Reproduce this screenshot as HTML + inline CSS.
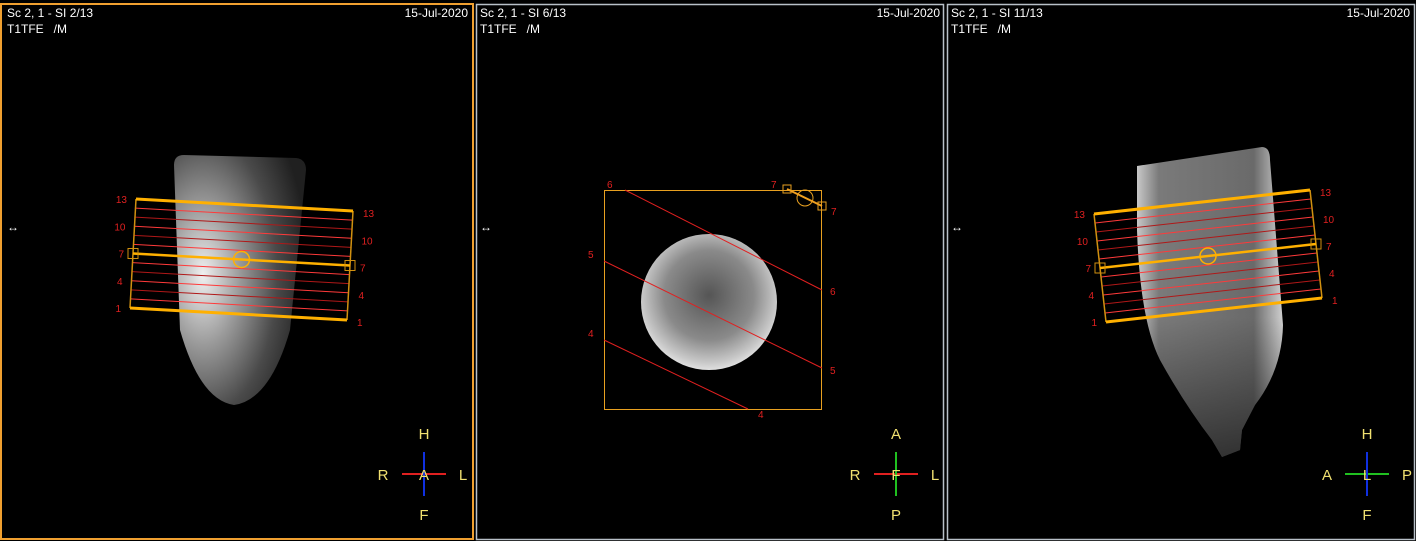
<!DOCTYPE html>
<html><head><meta charset="utf-8"><style>
html,body{margin:0;padding:0;background:#000;width:1416px;height:541px;overflow:hidden}
svg{display:block}
text{font-family:"Liberation Sans",Arial,sans-serif}
.hd{fill:#fff;font-size:12px}
.num{fill:#e02020;font-size:10px}
.ori{fill:#f0e070;font-size:15px}
</style></head><body>
<svg id="s" width="1416" height="541" viewBox="0 0 1416 541" xmlns="http://www.w3.org/2000/svg">
<defs>
<radialGradient id="g1" cx="0.22" cy="0.48" r="0.8"><stop offset="0" stop-color="#f0f0f0"/><stop offset="0.35" stop-color="#9a9a9a"/><stop offset="0.7" stop-color="#4a4a4a"/><stop offset="1" stop-color="#202020"/></radialGradient>
<radialGradient id="g2" cx="0.5" cy="0.45" r="0.55"><stop offset="0" stop-color="#555"/><stop offset="0.6" stop-color="#8a8a8a"/><stop offset="0.9" stop-color="#c8c8c8"/><stop offset="1" stop-color="#e0e0e0"/></radialGradient>
<linearGradient id="g3" x1="0" x2="1"><stop offset="0" stop-color="#c8c8c8"/><stop offset="0.15" stop-color="#7a7a7a"/><stop offset="0.8" stop-color="#6a6a6a"/><stop offset="1" stop-color="#d0d0d0"/></linearGradient>
<linearGradient id="g3v" x1="0" x2="0" y1="0" y2="1"><stop offset="0" stop-color="#000" stop-opacity="0"/><stop offset="0.55" stop-color="#000" stop-opacity="0"/><stop offset="1" stop-color="#000" stop-opacity="0.55"/></linearGradient>
</defs>
<rect width="1416" height="541" fill="#000"/>
<rect x="1" y="4" width="472" height="535" fill="none" stroke="#f0a030" stroke-width="2"/>
<rect x="476.5" y="4.5" width="467" height="535" fill="none" stroke="#b8c0c8" stroke-width="1.5"/>
<rect x="947.5" y="4.5" width="467" height="535" fill="none" stroke="#b8c0c8" stroke-width="1.5"/>
<text class="hd" x="7" y="17">Sc 2, 1 - SI 2/13</text><text class="hd" x="7" y="33">T1TFE &#160;&#160;/M</text><text class="hd" x="468" y="17" text-anchor="end">15-Jul-2020</text>
<text class="hd" x="480" y="17">Sc 2, 1 - SI 6/13</text><text class="hd" x="480" y="33">T1TFE &#160;&#160;/M</text><text class="hd" x="940" y="17" text-anchor="end">15-Jul-2020</text>
<text class="hd" x="951" y="17">Sc 2, 1 - SI 11/13</text><text class="hd" x="951" y="33">T1TFE &#160;&#160;/M</text><text class="hd" x="1410" y="17" text-anchor="end">15-Jul-2020</text>
<text class="hd" x="7" y="231" font-size="11">↔</text><text class="hd" x="480" y="231" font-size="11">↔</text><text class="hd" x="951" y="231" font-size="11">↔</text>
<path d="M174 165 Q174 155 184 155 L296 158 Q306 159 306 170 L290 330 Q270 400 234 405 Q200 400 180 330 Z" fill="url(#g1)"/>
<circle cx="709" cy="302" r="68" fill="url(#g2)"/>
<path d="M1137 166 L1262 147 Q1270 147 1270 160 L1283 325 Q1282 370 1255 405 L1242 430 L1240 450 L1222 457 L1212 440 Q1185 405 1160 360 Q1140 320 1137 230 Z" fill="url(#g3)"/>
<path d="M1137 166 L1262 147 Q1270 147 1270 160 L1283 325 Q1282 370 1255 405 L1242 430 L1240 450 L1222 457 L1212 440 Q1185 405 1160 360 Q1140 320 1137 230 Z" fill="url(#g3v)"/>
<g id="ov"></g>
<g fill="none" stroke="#e8a020" stroke-width="1"><rect x="604.5" y="190.5" width="217" height="219"/><rect x="783" y="185" width="8" height="8"/><rect x="818" y="202" width="8" height="8"/><circle cx="805" cy="198" r="8"/></g>
<line x1="787" y1="189" x2="822" y2="206" stroke="#f0a020" stroke-width="2"/>
<g stroke="#e02020" stroke-width="1"><line x1="625" y1="190" x2="822" y2="290"/><line x1="604" y1="261" x2="822" y2="368"/><line x1="604" y1="340" x2="748" y2="409"/></g>
<g class="num"><text x="607" y="188">6</text><text x="771" y="188">7</text><text x="831" y="215">7</text><text x="588" y="258">5</text><text x="830" y="295">6</text><text x="588" y="337">4</text><text x="830" y="374">5</text><text x="758" y="418">4</text></g>
<g class="ori" text-anchor="middle">
<text x="424" y="439">H</text><text x="383" y="480">R</text><text x="463" y="480">L</text><text x="424" y="520">F</text>
<text x="896" y="439">A</text><text x="855" y="480">R</text><text x="935" y="480">L</text><text x="896" y="520">P</text>
<text x="1367" y="439">H</text><text x="1327" y="480">A</text><text x="1407" y="480">P</text><text x="1367" y="520">F</text>
</g>
<line x1="402" y1="474" x2="446" y2="474" stroke="#e02020" stroke-width="2"/><line x1="424" y1="452" x2="424" y2="496" stroke="#1030e0" stroke-width="2"/>
<line x1="874" y1="474" x2="918" y2="474" stroke="#e02020" stroke-width="2"/><line x1="896" y1="452" x2="896" y2="496" stroke="#20c020" stroke-width="2"/>
<line x1="1345" y1="474" x2="1389" y2="474" stroke="#20c020" stroke-width="2"/><line x1="1367" y1="452" x2="1367" y2="496" stroke="#1030e0" stroke-width="2"/>
<g class="ori" text-anchor="middle"><text x="424" y="480">A</text><text x="896" y="480">F</text><text x="1367" y="480">L</text></g>
</svg>
<script>
var ns="http://www.w3.org/2000/svg",ov=document.getElementById("ov");
function el(t,a){var e=document.createElementNS(ns,t);for(var k in a)e.setAttribute(k,a[k]);ov.appendChild(e);return e}
function stack(TL,TR,BL,BR){
 for(var i=0;i<13;i++){var t=i/12;
  var lx=TL[0]+t*(BL[0]-TL[0]),ly=TL[1]+t*(BL[1]-TL[1]),rx=TR[0]+t*(BR[0]-TR[0]),ry=TR[1]+t*(BR[1]-TR[1]);
  if(i>0&&i<12&&i!=6)el("line",{x1:lx,y1:ly,x2:rx,y2:ry,stroke:(i%2?"#ff3a3a":"#b01818"),"stroke-width":1});
 }
 el("line",{x1:TL[0],y1:TL[1],x2:BL[0],y2:BL[1],stroke:"#d09010","stroke-width":1.5});
 el("line",{x1:TR[0],y1:TR[1],x2:BR[0],y2:BR[1],stroke:"#d09010","stroke-width":1.5});
 el("line",{x1:TL[0],y1:TL[1],x2:TR[0],y2:TR[1],stroke:"#ffb000","stroke-width":3});
 el("line",{x1:BL[0],y1:BL[1],x2:BR[0],y2:BR[1],stroke:"#ffb000","stroke-width":3});
 var ml=[(TL[0]+BL[0])/2,(TL[1]+BL[1])/2],mr=[(TR[0]+BR[0])/2,(TR[1]+BR[1])/2];
 el("line",{x1:ml[0],y1:ml[1],x2:mr[0],y2:mr[1],stroke:"#ffb000","stroke-width":2.5});
 el("rect",{x:ml[0]-5,y:ml[1]-5,width:10,height:10,fill:"none",stroke:"#d09010"});
 el("rect",{x:mr[0]-5,y:mr[1]-5,width:10,height:10,fill:"none",stroke:"#d09010"});
 el("circle",{cx:(ml[0]+mr[0])/2,cy:(ml[1]+mr[1])/2,r:8,fill:"none",stroke:"#ffb000","stroke-width":1.5});
 [["13",0],["10",3],["7",6],["4",9],["1",12]].forEach(function(p){var t=p[1]/12;
  var lx=TL[0]+t*(BL[0]-TL[0]),ly=TL[1]+t*(BL[1]-TL[1]),rx=TR[0]+t*(BR[0]-TR[0]),ry=TR[1]+t*(BR[1]-TR[1]);
  var a=el("text",{x:lx-9,y:ly+4,"class":"num","text-anchor":"end"});a.textContent=p[0];
  var b=el("text",{x:rx+10,y:ry+6,"class":"num"});b.textContent=p[0];});
}
stack([136,199],[353,211],[130,308],[347,320]);
stack([1094,214],[1310,190],[1106,322],[1322,298]);
</script>
</body></html>
